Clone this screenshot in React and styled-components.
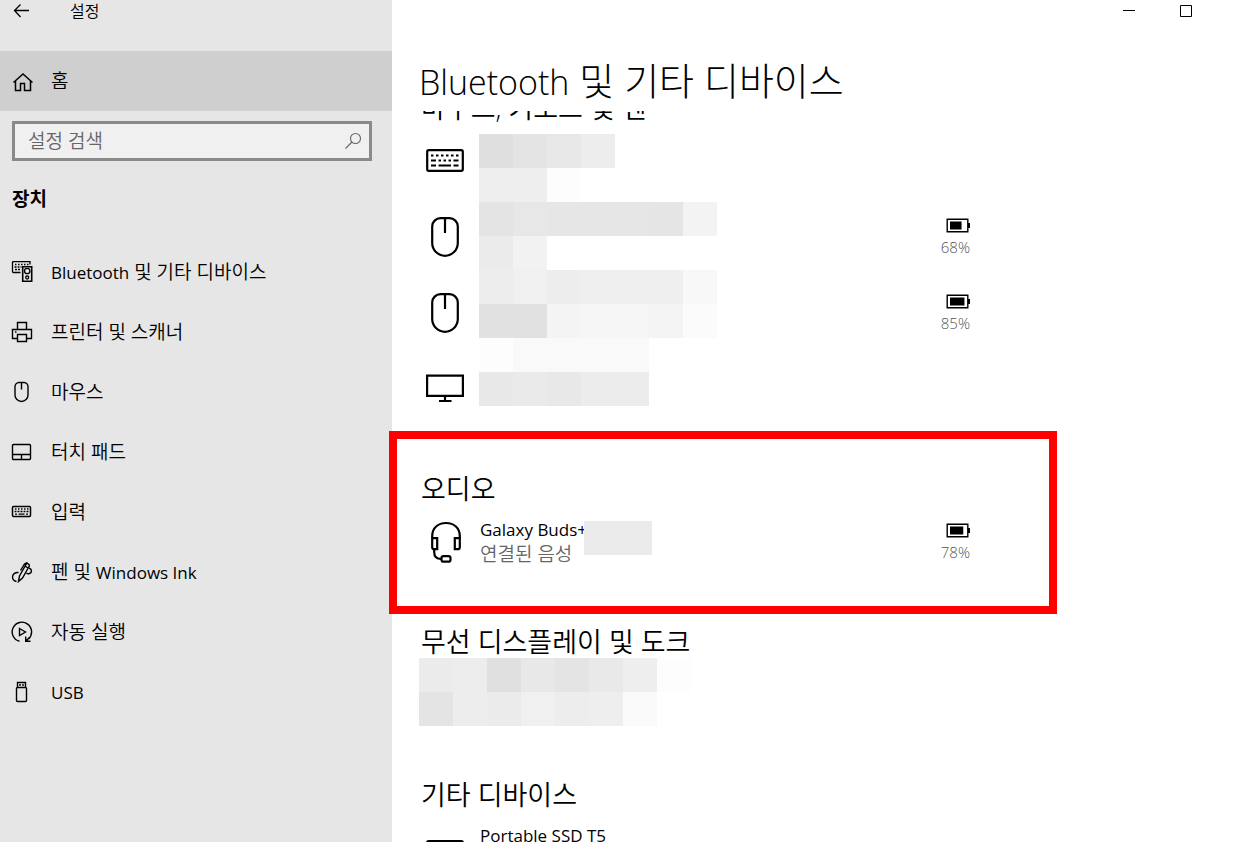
import styled, { createGlobalStyle } from "styled-components";

const GlobalStyle = createGlobalStyle`
  * {
    box-sizing: border-box;
  }

  body {
    margin: 0;
    overflow: hidden;
    color: #000;
    background: #fff;
    font-family: "Open Sans", "Noto Sans CJK KR", sans-serif;
    font-size: 19px;
    line-height: 24px;
    font-weight: 350;
  }
`;

const Layout = styled.div`
  display: flex;
  height: 100vh;
`;

const Sidebar = styled.aside`
  flex: 0 0 392px;
  background: #e6e6e6;
`;

const TitleBar = styled.header`
  display: flex;
  align-items: center;
  height: 22px;
  margin-bottom: 29px;
  padding-left: 12px;
  gap: 40px;
  font-size: 16px;
`;

const IconButton = styled.button`
  display: flex;
  align-items: center;
  justify-content: center;
  width: ${({ $width }) => $width}px;
  height: 22px;
  padding: 0;
  border: 0;
  background: none;
  color: #000;
`;

const Icon = styled.svg`
  display: block;
  flex: none;
  fill: none;
  stroke: currentColor;
  stroke-width: ${({ $stroke }) => $stroke || 1.3};
`;

const Latin = styled.span`
  font-size: 17px;
  line-height: 1;
  font-weight: 400;
`;

const NavLink = styled.a`
  display: flex;
  align-items: center;
  gap: 18px;
  height: 60px;
  padding-left: 11px;
  color: #000;
  text-decoration: none;
  background: ${({ $active }) => ($active ? "#cfcfcf" : "transparent")};
`;

const SearchBox = styled.label`
  display: flex;
  align-items: center;
  height: 40px;
  margin: 10px 20px 0 12px;
  padding: 0 7px 0 13px;
  border: 3px solid #8a8a8a;
  background: #f0f0f0;
  color: #666;
`;

const SearchInput = styled.input`
  flex: 1;
  min-width: 0;
  padding: 0;
  border: 0;
  outline: 0;
  background: none;
  font: inherit;

  &::placeholder {
    color: #666;
    opacity: 1;
  }
`;

const NavTitle = styled.h2`
  margin: 26px 0 31px 12px;
  font-size: 19px;
  line-height: 24px;
  font-weight: 700;
`;

const Main = styled.main`
  display: flex;
  flex: 1;
  flex-direction: column;
  min-width: 0;
  min-height: 0;
`;

const WindowControls = styled.div`
  display: flex;
  flex: none;
  justify-content: flex-end;
  padding-right: 22px;
`;

const PageTitle = styled.h1`
  flex: none;
  margin: 34px 0 7px 27px;
  font-size: 38px;
  line-height: 48px;
  font-weight: 300;

  ${Latin} {
    font-size: 34px;
    font-weight: 300;
  }
`;

const ScrollArea = styled.div`
  display: flex;
  flex: 1;
  flex-direction: column;
  gap: 45px;
  min-height: 0;
  padding-left: 27px;
  overflow-y: clip;

  & > :first-child {
    margin-top: -21px;
  }
`;

const Section = styled.section`
  position: relative;
  flex: none;
  max-width: 551px;
`;

const SectionTitle = styled.h2`
  margin: 0;
  padding: 4px 0 0 2px;
  font-size: 27px;
  line-height: 28px;
  font-weight: 350;
`;

const DeviceList = styled.div`
  position: relative;
  min-height: 76px;
`;

const DeviceRow = styled.div`
  display: flex;
  align-items: center;
  height: 76px;
  padding-top: 2px;
`;

const DeviceIcon = styled.div`
  display: flex;
  flex: 0 0 52px;
  justify-content: center;
`;

const DeviceText = styled.div`
  flex: 1;
  padding-left: 9px;
`;

const DeviceName = styled.div`
  font-size: 17px;
  font-weight: 400;
`;

const DeviceStatus = styled.div`
  color: #666;
`;

const Battery = styled.div`
  display: flex;
  flex-direction: column;
  align-items: flex-end;
  gap: 5px;
  color: #555;
  font-size: 15px;
  line-height: 18px;
  font-weight: 300;
`;

const Mosaic = styled.div`
  position: absolute;
  top: ${({ $top }) => $top}px;
  left: ${({ $left }) => $left}px;
  display: grid;
  grid-template-columns: repeat(${({ $columns }) => $columns}, 34px);
  grid-auto-rows: 34px;
`;

const Tile = styled.span`
  background: ${({ $shade }) => `#${$shade}${$shade}${$shade}`};
`;

const Highlight = styled.div`
  position: absolute;
  top: -40px;
  right: -87px;
  bottom: -35px;
  left: -30px;
  border: 8px solid #f00;
  pointer-events: none;
`;

const DEVICE_TILES = [
  "df e4 e7 ed ff ff ff",
  "ee ee fd ff ff ff ff",
  "e4 e7 e6 e6 e6 e5 f3",
  "eb f2 ff ff ff ff ff",
  "ed f0 ed ef ef ef f8",
  "e1 e1 f4 f6 f6 f4 fb",
  "fd f9 f9 f9 f9 ff ff",
  "e8 ea e8 ec ec ff ff",
];

const DISPLAY_TILES = [
  "eb ed e0 e8 e4 e9 ee fd",
  "e4 ed eb f0 ed ee fa ff",
];

const Tiles = ({ rows, top, left }) => (
  <Mosaic
    $top={top}
    $left={left}
    $columns={rows[0].split(" ").length}
    aria-hidden="true"
  >
    {rows
      .join(" ")
      .split(" ")
      .map((shade, i) => (
        <Tile key={i} $shade={shade} />
      ))}
  </Mosaic>
);

const BackIcon = () => (
  <Icon width="18" height="16" viewBox="0 0 18 16">
    <path d="M17 7.500H2.500M8.500 1.500l-6 6 6 6.500" />
  </Icon>
);

const HomeIcon = () => (
  <Icon width="22" height="22" viewBox="0 0 22 22" $stroke={1.5}>
    <path d="M2.500 12.500 12 4l9.500 8.500M4.500 11v9.500h5v-7h4v7h6V11" />
  </Icon>
);

const SearchIcon = () => (
  <Icon width="18" height="18" viewBox="0 0 18 18" $stroke={1.1}>
    <circle cx="11.500" cy="6.500" r="5" />
    <path d="M8 10 1.500 16.500" />
  </Icon>
);

const DevicesIcon = () => (
  <Icon width="22" height="22" viewBox="0 0 22 22">
    <path d="M9.500 11.500H2.500a1 1 0 0 1-1-1V1.500a1 1 0 0 1 1-1h16.500v3" />
    <path d="M4 3.500h14" strokeDasharray="1.500 1.500" />
    <path d="M3.500 6h7" strokeDasharray="2 1" />
    <path d="M4 8.500h6" strokeDasharray="2 1" />
    <path d="M11.700 5.700h9v14.600h-9z" strokeWidth="1.600" />
    <circle cx="16.200" cy="10" r="2.700" />
    <circle cx="16.200" cy="16.500" r="1.500" />
  </Icon>
);

const PrinterIcon = () => (
  <Icon width="22" height="22" viewBox="0 0 22 22" $stroke={1.4}>
    <path d="M6.500 8.500v-7h9v7M6.500 17.500h-5v-9h19v9h-5" />
    <path d="M6.500 13.500h9v7h-9z" />
    <path d="M4 11h1.500" />
  </Icon>
);

const MouseIcon = () => (
  <Icon width="22" height="22" viewBox="0 0 22 22" $stroke={1.4}>
    <path d="M8 1.500h5A4 4 0 0 1 17 6v8a6.500 6.500 0 0 1-13 0V6A4 4 0 0 1 8 1.500ZM10.500 1.500v7" />
  </Icon>
);

const TouchpadIcon = () => (
  <Icon width="22" height="22" viewBox="0 0 22 22" $stroke={1.4}>
    <rect x="1.500" y="3.500" width="18" height="15" rx="1" />
    <path d="M1.500 13.500h18M10.500 13.500v5" />
  </Icon>
);

const KeyboardSmallIcon = () => (
  <Icon width="22" height="22" viewBox="0 0 22 22">
    <rect x="1.500" y="5.500" width="18" height="10" rx="1" strokeWidth="1.500" />
    <path d="M4 8h14" strokeDasharray="1.500 1.500" />
    <path d="M3.500 10.500h14" strokeDasharray="2 1" />
    <path d="M4 13.200h2M7.500 13.200h6M15 13.200h2" />
  </Icon>
);

const PenIcon = () => (
  <Icon width="22" height="22" viewBox="0 0 22 22" $stroke={1.4}>
    <path d="M7.500 20.500 8.500 15 15 3.500a1.800 1.800 0 0 1 3 2L11.500 17 7.500 20.500ZM9.500 9.500l4-6.500 3-1.500M14 5l3 2" />
    <path d="M7.500 11.500C4 11 1.500 13.500 1.500 16c0 2.500 2 4 4 4.500M15.500 12c1.500 1.500 5 .5 5-2 0-1.800-1.200-2.500-2.500-3" />
  </Icon>
);

const AutoplayIcon = () => (
  <Icon width="22" height="22" viewBox="0 0 22 22" $stroke={1.4}>
    <path d="M8.500 20.300a9.700 9.700 0 1 1 9-2.300" />
    <path d="M14.700 15.500v4.800h4.800M14.700 20.300l4-4" />
    <path d="m8.500 7.500 6 3.500-6 3.500z" />
  </Icon>
);

const UsbIcon = () => (
  <Icon width="22" height="22" viewBox="0 0 22 22" $stroke={1.4}>
    <path d="M6.500 6.500v-5h8v5M9 3v2M12 3v2" />
    <rect x="5.500" y="6.500" width="10" height="14" rx="1" />
  </Icon>
);

const KeyboardIcon = () => (
  <Icon width="38" height="24" viewBox="0 0 38 24" $stroke={2.2}>
    <rect x="1.200" y="1.200" width="35.600" height="20.600" rx="1.500" />
    <path d="M5 6.500h28" strokeDasharray="2.500 2.500" />
    <path d="M5 11.500h5M12.500 11.500h2.500M17.500 11.500h2.500M22.500 11.500h2.500M27.500 11.500h5" />
    <path d="M5 16.500h5M12.500 16.500h12.500M27.500 16.500h5" />
  </Icon>
);

const LargeMouseIcon = () => (
  <Icon width="28" height="40" viewBox="0 0 28 40" $stroke={2.2}>
    <path d="M9.500 1.200h9a8.300 8.300 0 0 1 8.300 8.300V26a12.800 12.800 0 0 1-25.600 0V9.500a8.300 8.300 0 0 1 8.300-8.300ZM14 1v15" />
  </Icon>
);

const MonitorIcon = () => (
  <Icon width="38" height="30" viewBox="0 0 38 30" $stroke={2.2}>
    <path d="M1.100 1.600h35.800v20.300H1.100zM19 22v4.500M13 27h12.500" />
  </Icon>
);

const HeadsetIcon = () => (
  <Icon width="32" height="42" viewBox="0 0 32 42" $stroke={2.2}>
    <path d="M3.200 17v-2C3.200 7 9 2 17 2s13.800 5 13.800 13v2" />
    <path d="M3.200 17.200h5v11h-3q-2 0-2-2zM30.800 17.200h-5v11h3q2 0 2-2z" />
    <path d="M5.200 28v3q0 7 7 7" />
    <rect x="12.500" y="35.200" width="9" height="5.500" rx="2" />
  </Icon>
);

const DriveIcon = () => (
  <Icon width="38" height="16" viewBox="0 0 38 16" $stroke={2.4}>
    <rect x="1.200" y="1.200" width="35.600" height="13.600" rx="1.500" />
  </Icon>
);

const BatteryLevel = ({ level }) => (
  <Battery>
    <Icon width="24" height="15" viewBox="0 0 24 15" color="#000">
      <path d="M1.200 1.200h20.600v12.600H1.200z" strokeWidth="1.400" />
      <path d="M22 5h2v5h-2z" fill="currentColor" stroke="none" />
      <rect
        x="4"
        y="3.500"
        width={(level * 17) / 100}
        height="8"
        fill="currentColor"
        stroke="none"
      />
    </Icon>
    <span>{level}%</span>
  </Battery>
);

const NAV_ITEMS = [
  {
    icon: DevicesIcon,
    label: (
      <>
        <Latin>Bluetooth</Latin> 및 기타 디바이스
      </>
    ),
  },
  { icon: PrinterIcon, label: "프린터 및 스캐너" },
  { icon: MouseIcon, label: "마우스" },
  { icon: TouchpadIcon, label: "터치 패드" },
  { icon: KeyboardSmallIcon, label: "입력" },
  {
    icon: PenIcon,
    label: (
      <>
        펜 및 <Latin>Windows Ink</Latin>
      </>
    ),
  },
  { icon: AutoplayIcon, label: "자동 실행" },
  { icon: UsbIcon, label: <Latin>USB</Latin> },
];

const DEVICES = [
  { icon: KeyboardIcon },
  { icon: LargeMouseIcon, battery: 68 },
  { icon: LargeMouseIcon, battery: 85 },
  { icon: MonitorIcon },
];

const Device = ({ icon: Glyph, battery, children }) => (
  <DeviceRow>
    <DeviceIcon>
      <Glyph />
    </DeviceIcon>
    <DeviceText>{children}</DeviceText>
    {battery && <BatteryLevel level={battery} />}
  </DeviceRow>
);

const App = () => {
  return (
    <Layout>
      <GlobalStyle />
      <Sidebar>
        <TitleBar>
          <IconButton $width={18} aria-label="뒤로">
            <BackIcon />
          </IconButton>
          <span>설정</span>
        </TitleBar>
        <NavLink href="#home" $active>
          <HomeIcon />
          <span>홈</span>
        </NavLink>
        <SearchBox>
          <SearchInput type="text" placeholder="설정 검색" />
          <SearchIcon />
        </SearchBox>
        <NavTitle>장치</NavTitle>
        <nav>
          {NAV_ITEMS.map(({ icon: Glyph, label }, i) => (
            <NavLink key={i} href="#device">
              <Glyph />
              <span>{label}</span>
            </NavLink>
          ))}
        </nav>
      </Sidebar>
      <Main>
        <WindowControls>
          <IconButton $width={57} aria-label="최소화">
            <Icon width="12" height="12" viewBox="0 0 12 12" $stroke={1}>
              <path d="M0 5.500h12" />
            </Icon>
          </IconButton>
          <IconButton $width={57} aria-label="최대화">
            <Icon width="12" height="12" viewBox="0 0 12 12" $stroke={1}>
              <path d="M.5.500h11v11H.500z" />
            </Icon>
          </IconButton>
        </WindowControls>
        <PageTitle>
          <Latin>Bluetooth</Latin> 및 기타 디바이스
        </PageTitle>
        <ScrollArea>
          <Section>
            <SectionTitle>마우스, 키보드 및 펜</SectionTitle>
            <DeviceList>
              {DEVICES.map((device, i) => (
                <Device key={i} {...device} />
              ))}
              <Tiles rows={DEVICE_TILES} top={12} left={60} />
            </DeviceList>
          </Section>
          <Section>
            <SectionTitle>오디오</SectionTitle>
            <DeviceList>
              <Device icon={HeadsetIcon} battery={78}>
                <DeviceName>Galaxy Buds+</DeviceName>
                <DeviceStatus>연결된 음성</DeviceStatus>
              </Device>
              <Tiles rows={["eb eb"]} top={18} left={165} />
            </DeviceList>
            <Highlight />
          </Section>
          <Section>
            <SectionTitle>무선 디스플레이 및 도크</SectionTitle>
            <DeviceList>
              <Tiles rows={DISPLAY_TILES} top={2} left={0} />
            </DeviceList>
          </Section>
          <Section>
            <SectionTitle>기타 디바이스</SectionTitle>
            <DeviceList>
              <Device icon={DriveIcon}>
                <DeviceName>Portable SSD T5</DeviceName>
                <DeviceStatus>연결됨</DeviceStatus>
              </Device>
            </DeviceList>
          </Section>
        </ScrollArea>
      </Main>
    </Layout>
  );
};

export default App;
